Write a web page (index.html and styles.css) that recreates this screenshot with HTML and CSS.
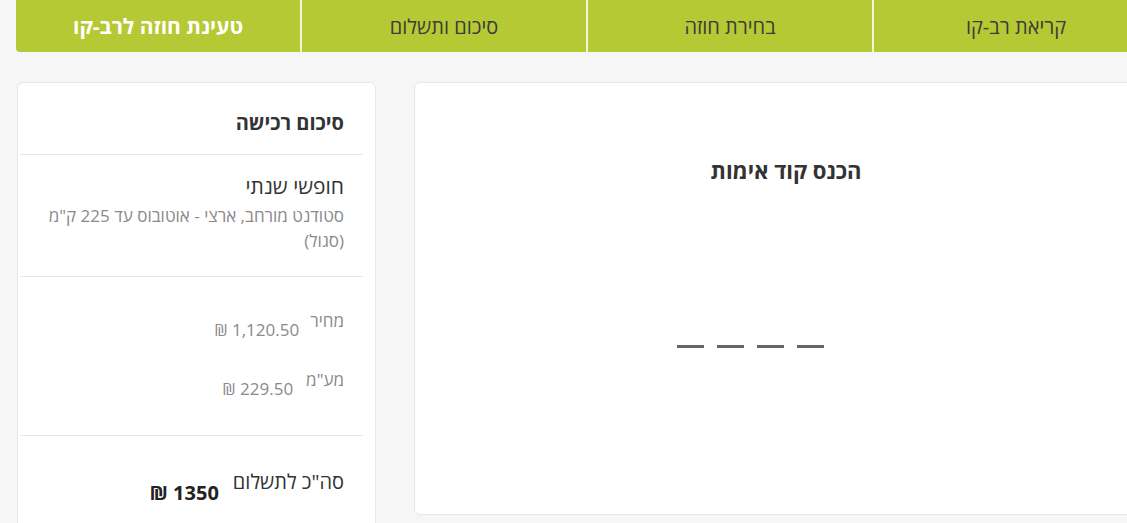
FILE: index.html
```html
<!DOCTYPE html>
<html lang="he">
<head>
    <meta charset="utf-8">
    <title>טעינת חוזה לרב-קו</title>
    <link rel="stylesheet" href="styles.css">
</head>
<body>
    <div class="page">
        <div class="steps">
            <div class="step">קריאת רב-קו</div>
            <div class="step">בחירת חוזה</div>
            <div class="step">סיכום ותשלום</div>
            <div class="step active">טעינת חוזה לרב-קו</div>
        </div>

        <div class="content">
            <div class="verify">
                <h2 class="verify-title">הכנס קוד אימות</h2>
                <div class="code-inputs">
                    <input class="code-digit" type="text" maxlength="1">
                    <input class="code-digit" type="text" maxlength="1">
                    <input class="code-digit" type="text" maxlength="1">
                    <input class="code-digit" type="text" maxlength="1">
                </div>
            </div>

            <div class="summary">
                <div class="summary-title">סיכום רכישה</div>

                <div class="summary-section">
                    <div class="contract-name">חופשי שנתי</div>
                    <div class="contract-desc">סטודנט מורחב, ארצי - אוטובוס עד 225 ק"מ (סגול)</div>
                </div>

                <div class="summary-section prices">
                    <div class="price-row">
                        <span class="price-label">מחיר</span>
                        <span class="price-value">1,120.50 ₪</span>
                    </div>
                    <div class="price-row">
                        <span class="price-label">מע"מ</span>
                        <span class="price-value">229.50 ₪</span>
                    </div>
                </div>

                <div class="summary-section total">
                    <div class="price-row">
                        <span class="total-label">סה"כ לתשלום</span>
                        <span class="total-value">1350 ₪</span>
                    </div>
                </div>
            </div>
        </div>
    </div>
</body>
</html>
```

FILE: styles.css
```css
html, body {
    margin: 0;
    background-color: #f6f6f6;
    overflow: hidden;
}
body {
    font-family: "Open Sans", "DejaVu Sans", sans-serif;
    color: #333;
}
.page {
    width: 1142px;
    margin-left: 16px;
    direction: rtl;
}
.steps {
    display: flex;
    height: 52px;
    background-color: #b5c934;
    border-radius: 0 0 4px 4px;
    overflow: hidden;
}
.step {
    flex: 1;
    display: flex;
    align-items: center;
    justify-content: center;
    font-size: 20px;
    color: #3c3c3c;
    border-left: 2px solid #f2f5dc;
}
.step:last-child {
    border-left: none;
}
.step.active {
    color: #fff;
    font-weight: bold;
    font-size: 21px;
}
.content {
    display: flex;
    gap: 38px;
    margin-top: 30px;
}
.summary {
    width: 359px;
    height: 460px;
    background: #fff;
    border: 1px solid #e6e6e6;
    border-radius: 6px;
    padding: 0 0 0 2px;
    box-sizing: border-box;
}
.summary-title {
    font-size: 20px;
    font-weight: bold;
    padding-top: 26px;
    height: 45px;
    margin-right: 12px;
    padding-right: 19px;
    border-bottom: 1px solid #e6e6e6;
}
.summary-section {
    margin-right: 12px;
    padding-right: 19px;
    border-bottom: 1px solid #e6e6e6;
}
.contract-name {
    font-size: 21px;
    padding-top: 17px;
    line-height: 28px;
}
.contract-desc {
    font-size: 17px;
    color: #8a8a8a;
    line-height: 25px;
    padding: 3px 0 23px 0;
}
.prices {
    padding-top: 32px;
    height: 126px;
}
.price-row {
    display: flex;
    align-items: flex-start;
    gap: 10px;
    height: 59px;
}
.price-label {
    font-size: 17px;
    color: #8a8a8a;
}
.price-value {
    font-size: 17px;
    color: #8a8a8a;
    margin-top: 9px;
    padding-right: 1px;
}
.price-row:nth-child(2) .price-value {
    padding-right: 3px;
}
.total {
    border-bottom: none;
    padding-top: 32px;
}
.total-label {
    font-size: 20px;
}
.total-value {
    font-size: 20px;
    font-weight: bold;
    color: #222;
    margin-top: 11px;
    margin-right: 4px;
}
.verify {
    width: 744px;
    height: 433px;
    background: #fff;
    border: 1px solid #e6e6e6;
    border-radius: 6px;
    box-sizing: border-box;
    text-align: center;
}
.verify-title {
    font-size: 22px;
    font-weight: bold;
    margin: 72px 0 0 0;
    line-height: 30px;
}
.code-inputs {
    direction: ltr;
    display: flex;
    justify-content: center;
    gap: 13px;
    margin-top: 140px;
    margin-right: 72px;
}
.code-digit {
    width: 27px;
    height: 20px;
    border: none;
    border-bottom: 3px solid #666;
    padding: 0;
    outline: none;
    background: transparent;
}
```
